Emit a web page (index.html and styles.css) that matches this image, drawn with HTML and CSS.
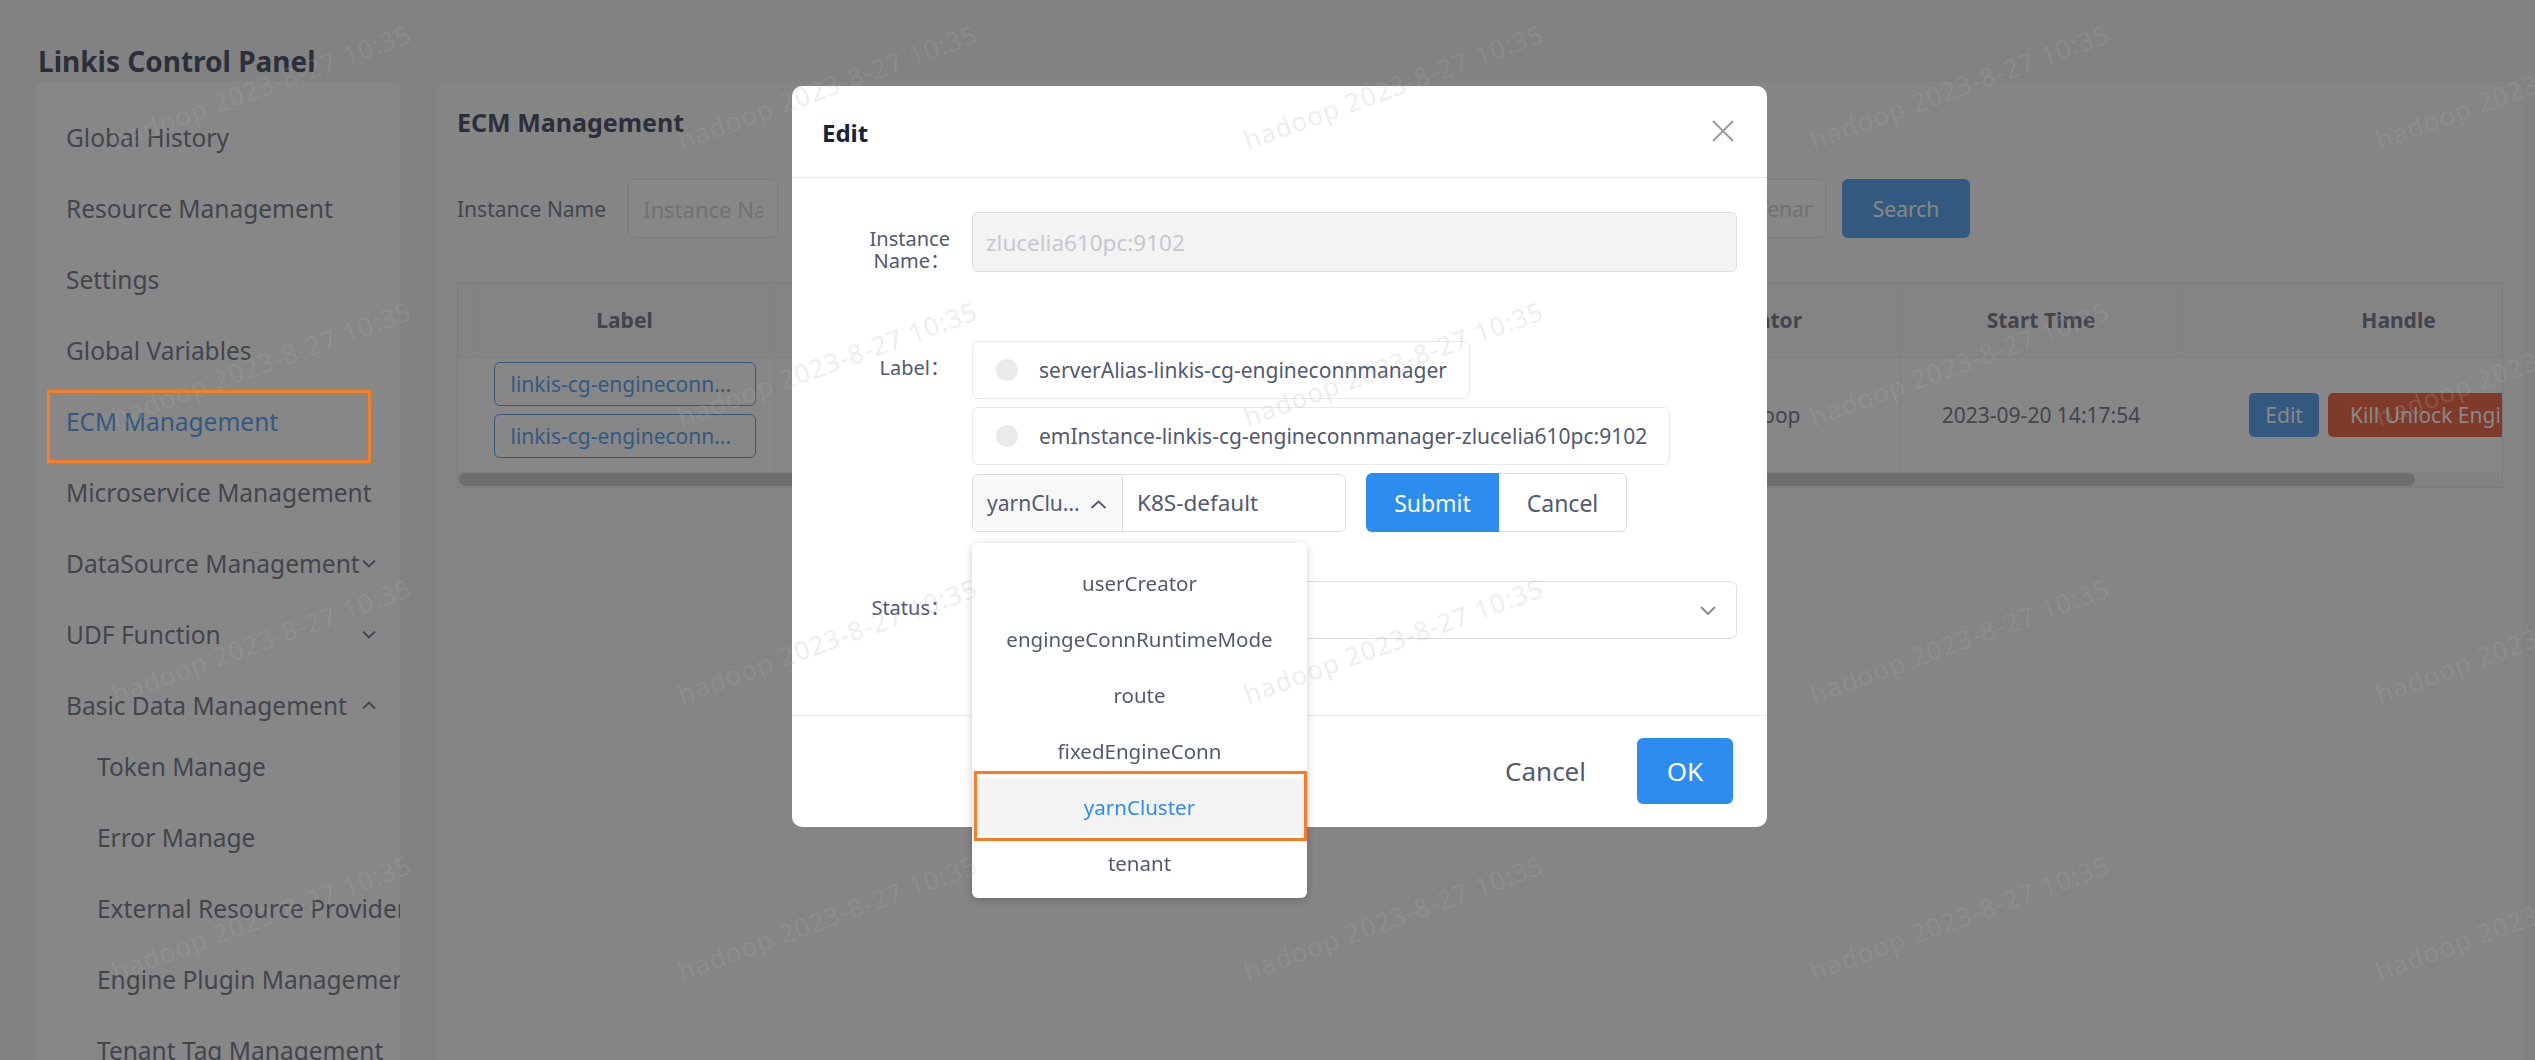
FILE: index.html
```html
<!DOCTYPE html>
<html lang="en">
<head>
<meta charset="utf-8">
<title>Linkis Control Panel</title>
<link rel="stylesheet" href="styles.css">
</head>
<body>
<div class="app">
  <header class="app-title">Linkis Control Panel</header>
  <div class="layout">
    <aside class="sidebar">
      <ul class="menu">
        <li class="menu-item">Global History</li>
        <li class="menu-item">Resource Management</li>
        <li class="menu-item">Settings</li>
        <li class="menu-item">Global Variables</li>
        <li class="menu-item active">ECM Management</li>
        <li class="menu-item">Microservice Management</li>
        <li class="menu-item"><span class="mi-text">DataSource Management</span><svg class="chev" viewBox="0 0 14 9"><path d="M1 1.5 L7 7.5 L13 1.5" fill="none" stroke="#515a6e" stroke-width="1.8"/></svg></li>
        <li class="menu-item"><span class="mi-text">UDF Function</span><svg class="chev" viewBox="0 0 14 9"><path d="M1 1.5 L7 7.5 L13 1.5" fill="none" stroke="#515a6e" stroke-width="1.8"/></svg></li>
        <li class="menu-item"><span class="mi-text">Basic Data Management</span><svg class="chev" viewBox="0 0 14 9"><path d="M1 7.5 L7 1.5 L13 7.5" fill="none" stroke="#515a6e" stroke-width="1.8"/></svg></li>
        <li class="sub-wrap">
          <ul class="menu sub-list">
            <li class="menu-item sub">Token Manage</li>
            <li class="menu-item sub">Error Manage</li>
            <li class="menu-item sub">External Resource Provider</li>
            <li class="menu-item sub">Engine Plugin Management</li>
            <li class="menu-item sub">Tenant Tag Management</li>
          </ul>
        </li>
      </ul>
    </aside>
    <main class="content">
      <div class="panel-head">ECM Management</div>
      <div class="filters">
        <div class="f-item">
          <span class="f-label first">Instance Name</span>
          <div class="f-input"><span class="ph">Instance Name</span></div>
        </div>
        <div class="f-item">
          <span class="f-label">Status</span>
          <div class="f-input f-select"><span class="ph">Status</span></div>
        </div>
        <div class="f-item">
          <span class="f-label">Creator</span>
          <div class="f-input f-narrow"><span class="ph">Creator</span></div>
        </div>
        <div class="f-item last">
          <span class="f-label">Tenant</span>
          <div class="f-input f-tenant"><span class="ph">Input Tenant</span></div>
        </div>
        <div class="btn-search">Search</div>
      </div>
      <div class="table">
        <div class="t-row t-head">
          <div class="th"></div>
          <div class="th">Label</div>
          <div class="th">Instance Name</div>
          <div class="th">Status</div>
          <div class="th">Used Resources</div>
          <div class="th">Creator</div>
          <div class="th">Start Time</div>
          <div class="th">Handle</div>
        </div>
        <div class="t-row t-body">
          <div class="td"></div>
          <div class="td label-cell">
            <span class="t-tag">linkis-cg-engineconn...</span>
            <span class="t-tag">linkis-cg-engineconn...</span>
          </div>
          <div class="td">zlucelia610pc:9102</div>
          <div class="td">Healthy</div>
          <div class="td">0 cores, 0 G</div>
          <div class="td">hadoop</div>
          <div class="td">2023-09-20 14:17:54</div>
          <div class="td handle-cell">
            <span class="t-btn t-edit">Edit</span>
            <span class="t-btn t-kill">Kill Unlock Engine</span>
          </div>
        </div>
        <div class="t-scroll"><div class="t-thumb"></div></div>
      </div>
    </main>
  </div>
</div>

<div class="mask"></div>

<div class="modal">
  <div class="modal-header">
    <span class="modal-title">Edit</span>
    <svg class="modal-close" viewBox="0 0 22 22"><path d="M1 1 L21 21 M21 1 L1 21" stroke="#999" stroke-width="1.8" fill="none"/></svg>
  </div>
  <div class="modal-body">
    <div class="form-item fi-instance">
      <label class="form-label">Instance Name：</label>
      <div class="form-content">
        <div class="m-input disabled">zlucelia610pc:9102</div>
      </div>
    </div>
    <div class="form-item fi-label">
      <label class="form-label">Label：</label>
      <div class="form-content">
        <div class="dot-tag"><span class="dot"></span>serverAlias-linkis-cg-engineconnmanager</div>
        <div class="dot-tag"><span class="dot"></span>emInstance-linkis-cg-engineconnmanager-zlucelia610pc:9102</div>
        <div class="tag-add">
          <div class="input-group">
            <div class="ig-select"><span>yarnClu...</span><svg class="ig-chev" viewBox="0 0 17 9"><path d="M1.5 8 L8.5 1.5 L15.5 8" fill="none" stroke="#515a6e" stroke-width="1.8"/></svg></div>
            <div class="ig-input">K8S-default</div>
            <ul class="dropdown">
              <li class="dd-item">userCreator</li>
              <li class="dd-item">engingeConnRuntimeMode</li>
              <li class="dd-item">route</li>
              <li class="dd-item">fixedEngineConn</li>
              <li class="dd-item selected">yarnCluster</li>
              <li class="dd-item">tenant</li>
            </ul>
          </div>
          <div class="btn-group">
            <span class="btn-submit">Submit</span>
            <span class="btn-cancel">Cancel</span>
          </div>
        </div>
      </div>
    </div>
    <div class="form-item fi-status">
      <label class="form-label">Status：</label>
      <div class="form-content">
        <div class="m-select"><svg class="sel-chev" viewBox="0 0 16 9"><path d="M1 1 L8 8 L15 1" fill="none" stroke="#808695" stroke-width="1.8"/></svg></div>
      </div>
    </div>
  </div>
  <div class="modal-footer">
    <span class="btn-text">Cancel</span>
    <span class="btn-ok">OK</span>
  </div>
</div>

<div class="watermarks">
  <span class="wm r0 c0">hadoop 2023-8-27 10:35</span>
  <span class="wm r0 c1">hadoop 2023-8-27 10:35</span>
  <span class="wm r0 c2">hadoop 2023-8-27 10:35</span>
  <span class="wm r0 c3">hadoop 2023-8-27 10:35</span>
  <span class="wm r0 c4">hadoop 2023-8-27 10:35</span>
  <span class="wm r1 c0">hadoop 2023-8-27 10:35</span>
  <span class="wm r1 c1">hadoop 2023-8-27 10:35</span>
  <span class="wm r1 c2">hadoop 2023-8-27 10:35</span>
  <span class="wm r1 c3">hadoop 2023-8-27 10:35</span>
  <span class="wm r1 c4">hadoop 2023-8-27 10:35</span>
  <span class="wm r2 c0">hadoop 2023-8-27 10:35</span>
  <span class="wm r2 c1">hadoop 2023-8-27 10:35</span>
  <span class="wm r2 c2">hadoop 2023-8-27 10:35</span>
  <span class="wm r2 c3">hadoop 2023-8-27 10:35</span>
  <span class="wm r2 c4">hadoop 2023-8-27 10:35</span>
  <span class="wm r3 c0">hadoop 2023-8-27 10:35</span>
  <span class="wm r3 c1">hadoop 2023-8-27 10:35</span>
  <span class="wm r3 c2">hadoop 2023-8-27 10:35</span>
  <span class="wm r3 c3">hadoop 2023-8-27 10:35</span>
  <span class="wm r3 c4">hadoop 2023-8-27 10:35</span>
</div>

<div class="annot annot-menu"></div>
<div class="annot annot-option"></div>
</body>
</html>
```

FILE: styles.css
```css
* { box-sizing: border-box; }
html, body { margin: 0; padding: 0; }
body {
  width: 2535px;
  height: 1060px;
  overflow: hidden;
  position: relative;
  background: #f3f3f3;
  font-family: "Noto Sans", "Noto Sans CJK SC", sans-serif;
  color: #515a6e;
}
ul { list-style: none; margin: 0; padding: 0; }

/* ---------- page ---------- */
.app {
  height: 1060px;
  display: flex;
  flex-direction: column;
  padding: 0 12px 0 37px;
}
.app-title {
  height: 82px;
  flex: 0 0 82px;
  padding-top: 41px;
  padding-left: 1px;
  font-size: 28px;
  font-weight: 700;
  line-height: 40px;
  color: #17233d;
}
.layout {
  flex: 1;
  display: flex;
  gap: 37px;
  min-height: 0;
}
.sidebar {
  width: 363px;
  flex: 0 0 363px;
  background: #fff;
  border-radius: 6px 6px 0 0;
  padding-top: 20px;
  overflow: hidden;
}
.menu-item {
  height: 71px;
  display: flex;
  align-items: center;
  padding: 0 24px 0 29px;
  font-size: 24.5px;
  white-space: nowrap;
  color: #515a6e;
}
.menu-item.active { color: #2d8cf0; }
.menu-item.sub { padding-left: 60px; }
.sub-list { margin-top: -10px; }
.mi-text { flex: 0 0 auto; }
.chev {
  margin-left: auto;
  flex: 0 0 14px;
  width: 14px;
  height: 9px;
}

.content {
  flex: 1;
  min-width: 0;
  background: #fafafa;
  border-radius: 6px 6px 0 0;
  padding: 23px 20px 0 20px;
  overflow: hidden;
}
.panel-head {
  font-size: 25px;
  font-weight: 700;
  line-height: 34px;
  padding-bottom: 16px;
  border-bottom: 1px solid #e8eaec;
  color: #17233d;
}
.filters {
  margin-top: 23px;
  height: 59px;
  display: flex;
  align-items: center;
}
.f-item {
  display: flex;
  align-items: center;
  margin-right: 30px;
}
.f-item.last { margin-right: 16px; }
.f-label {
  width: 150px;
  margin-right: 23px;
  font-size: 21px;
  color: #515a6e;
  white-space: nowrap;
}
.f-label.first { width: 148px; }
.f-input {
  width: 150px;
  height: 59px;
  border: 1px solid #dcdee2;
  border-radius: 6px;
  background: #fff;
  padding: 0 14px;
  display: flex;
  align-items: center;
  font-size: 22px;
  color: #c5c8ce;
  white-space: nowrap;
  overflow: hidden;
}
.ph {
  display: block;
  min-width: 0;
  overflow: hidden;
  white-space: nowrap;
}
.f-select { width: 200px; }
.f-narrow { width: 103px; }
.f-tenant { width: 136px; padding: 0 12px 0 7px; font-size: 21px; }
.btn-search {
  width: 128px;
  height: 59px;
  border-radius: 6px;
  background: #2d8cf0;
  color: #fff;
  font-size: 21px;
  display: flex;
  align-items: center;
  justify-content: center;
}

.table {
  margin-top: 44px;
  width: 2046px;
  border: 1px solid #dcdee2;
  overflow: hidden;
  background: #fff;
}
.t-row {
  display: grid;
  grid-template-columns: 17px 300px 330px 200px 320px 276px 281px 434px;
  width: 2158px;
}
.t-head { height: 75px; border-bottom: 1px solid #e8eaec; }
.t-body { height: 114px; }
.th, .td {
  border-right: 1px solid #e8eaec;
  display: flex;
  align-items: center;
  justify-content: center;
  font-size: 21px;
  color: #515a6e;
  white-space: nowrap;
  overflow: hidden;
}
.th { background: #f8f8f9; font-weight: 700; }
.td { background: #fff; }
.label-cell {
  flex-direction: column;
  justify-content: flex-start;
  padding-top: 4px;
  gap: 8px;
}
.t-tag {
  width: 262px;
  height: 44px;
  border: 1px solid #2d8cf0;
  border-radius: 6px;
  color: #2d8cf0;
  font-size: 21px;
  line-height: 42px;
  padding: 0 16px;
  display: block;
  text-align: left;
}
.handle-cell { gap: 9px; }
.t-btn {
  height: 44px;
  border-radius: 5px;
  color: #fff;
  font-size: 21px;
  display: flex;
  align-items: center;
  flex: 0 0 auto;
}
.t-edit { background: #2d8cf0; padding: 0 16px; }
.t-kill { background: #ed4014; padding: 0 22px; }
.t-scroll {
  height: 15px;
  background: #f2f2f2;
  display: flex;
  align-items: center;
}
.t-thumb {
  width: 1956px;
  height: 13px;
  margin-left: 1px;
  border-radius: 7px;
  background: #c1c1c1;
}

/* ---------- overlays ---------- */
.mask {
  position: fixed;
  inset: 0;
  background: rgba(55, 55, 55, 0.6);
  z-index: 10;
}
.modal {
  position: absolute;
  left: 792px;
  top: 86px;
  width: 975px;
  background: #fff;
  border-radius: 10px;
  z-index: 20;
}
.modal-header {
  height: 92px;
  padding: 0 33px 0 30px;
  border-bottom: 1px solid #e8eaec;
  display: flex;
  align-items: center;
  justify-content: space-between;
}
.modal-title {
  font-size: 24px;
  font-weight: 700;
  color: #17233d;
  line-height: 32px;
  padding-top: 2px;
}
.modal-close { width: 22px; height: 22px; margin-top: -2px; }
.modal-body { padding: 34px 30px 76px 30px; }
.form-item { display: flex; }
.fi-instance { margin-bottom: 69px; }
.fi-label { margin-bottom: 49px; }
.form-label {
  width: 150px;
  flex: 0 0 150px;
  padding: 16px 22px 0 0;
  text-align: right;
  font-size: 20px;
  line-height: 22px;
  color: #515a6e;
}
.form-content {
  flex: 1;
  min-width: 0;
  display: flex;
  flex-direction: column;
  align-items: flex-start;
}
.m-input {
  width: 100%;
  height: 60px;
  border: 1px solid #dcdee2;
  border-radius: 6px;
  padding: 0 13px;
  display: flex;
  align-items: center;
  font-size: 22.5px;
}
.m-input.disabled { background: #f3f3f3; color: #c5c8ce; }
.dot-tag {
  height: 58px;
  margin-bottom: 8px;
  border: 1px solid #e8eaec;
  border-radius: 6px;
  padding: 0 22px 0 23px;
  display: flex;
  align-items: center;
  font-size: 21px;
  color: #515a6e;
  white-space: nowrap;
  background: #fff;
}
.dot {
  width: 22px;
  height: 22px;
  border-radius: 50%;
  background: #e8eaec;
  margin-right: 21px;
  flex: 0 0 22px;
}
.tag-add {
  display: flex;
  align-items: center;
}
.input-group {
  position: relative;
  width: 374px;
  height: 58px;
  border: 1px solid #dcdee2;
  border-radius: 6px;
  display: flex;
}
.ig-select {
  width: 150px;
  flex: 0 0 150px;
  background: #f8f8f9;
  border-right: 1px solid #dcdee2;
  border-radius: 6px 0 0 6px;
  padding-left: 14px;
  display: flex;
  align-items: center;
  font-size: 21px;
  color: #515a6e;
  white-space: nowrap;
}
.ig-chev { width: 17px; height: 9px; margin-left: 10px; margin-top: 3px; }
.ig-input {
  flex: 1;
  padding-left: 14px;
  display: flex;
  align-items: center;
  font-size: 22.5px;
  color: #515a6e;
}
.dropdown {
  position: absolute;
  top: 68px;
  left: -1px;
  width: 335px;
  background: #fff;
  border-radius: 6px;
  box-shadow: 0 2px 8px rgba(0, 0, 0, 0.2);
  padding: 12px 0 7px;
  z-index: 5;
}
.dd-item {
  height: 56px;
  line-height: 56px;
  text-align: center;
  font-size: 20.5px;
  color: #515a6e;
  white-space: nowrap;
}
.dd-item.selected { background: #f3f3f3; color: #2d8cf0; }
.btn-group { display: flex; margin-left: 20px; }
.btn-submit, .btn-cancel {
  height: 59px;
  display: flex;
  align-items: center;
  justify-content: center;
  font-size: 23px;
}
.btn-submit {
  width: 133px;
  background: #2d8cf0;
  color: #fff;
  border-radius: 6px 0 0 6px;
}
.btn-cancel {
  width: 128px;
  border: 1px solid #dcdee2;
  border-left: none;
  border-radius: 0 6px 6px 0;
  color: #515a6e;
  background: #fff;
}
.m-select {
  width: 100%;
  height: 58px;
  border: 1px solid #dcdee2;
  border-radius: 6px;
  display: flex;
  align-items: center;
  justify-content: flex-end;
  padding-right: 20px;
}
.sel-chev { width: 16px; height: 9px; }
.modal-footer {
  border-top: 1px solid #e8eaec;
  padding: 22px 34px 23px;
  display: flex;
  justify-content: flex-end;
  align-items: center;
}
.btn-text {
  height: 66px;
  padding: 0 24px;
  display: flex;
  align-items: center;
  font-size: 26px;
  color: #515a6e;
  margin-right: 27px;
}
.btn-ok {
  width: 96px;
  height: 66px;
  border-radius: 6px;
  background: #2d8cf0;
  color: #fff;
  font-size: 26px;
  display: flex;
  align-items: center;
  justify-content: center;
}

/* watermark layer */
.watermarks {
  position: fixed;
  inset: 0;
  z-index: 30;
  pointer-events: none;
  overflow: hidden;
}
.wm {
  position: absolute;
  font-size: 26px;
  line-height: 26px;
  letter-spacing: 1px;
  color: rgba(175, 175, 175, 0.22);
  white-space: nowrap;
  transform-origin: 0 100%;
  transform: rotate(-20deg);
}
.r0 { top: 127px; }
.r1 { top: 404px; }
.r2 { top: 681px; }
.r3 { top: 958px; }
.c0 { left: 117px; }
.c1 { left: 683px; }
.c2 { left: 1249px; }
.c3 { left: 1815px; }
.c4 { left: 2381px; }

/* screenshot annotation boxes */
.annot {
  position: absolute;
  border: 3px solid #fb7d23;
  z-index: 40;
  pointer-events: none;
}
.annot-menu { left: 47px; top: 390px; width: 324px; height: 73px; }
.annot-option { left: 974px; top: 771px; width: 333px; height: 70px; }
```
